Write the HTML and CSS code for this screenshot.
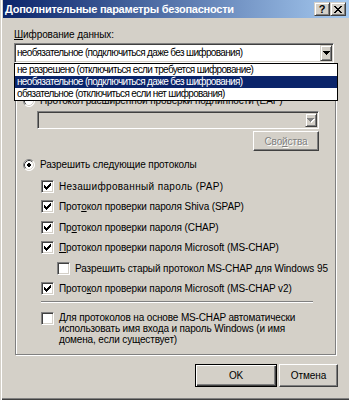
FILE: index.html
```html
<!DOCTYPE html>
<html lang="ru">
<head>
<meta charset="utf-8">
<title>Дополнительные параметры безопасности</title>
<link rel="stylesheet" href="styles.css">
</head>
<body>
<div class="window">
  <div class="titlebar">
    <span class="title-text">Дополнительные параметры безопасности</span>
    <div class="caption-buttons">
      <div class="cap-btn help">?</div>
      <div class="cap-btn"><svg width="8" height="7" viewBox="0 0 8 7"><path d="M0 0h2v1H0zM6 0h2v1H6zM1 1h2v1H1zM5 1h2v1H5zM2 2h4v1H2zM3 3h2v1H3zM2 4h4v1H2zM1 5h2v1H1zM5 5h2v1H5zM0 6h2v1H0zM6 6h2v1H6z"/></svg></div>
    </div>
  </div>
  <div class="content">
    <div class="label"><u>Ш</u>ифрование данных:</div>
    <div class="combo-wrap">
      <div class="combo">
        <div class="combo-text">необязательное (подключиться даже без шифрования)</div>
        <div class="combo-arrow"><svg width="7" height="4" viewBox="0 0 7 4"><path d="M0 0h7v1H0zM1 1h5v1H1zM2 2h3v1H2zM3 3h1v1H3z"/></svg></div>
      </div>
      <div class="listbox">
        <div class="list-item">не разрешено (отключиться если требуется шифрование)</div>
        <div class="list-item sel">необязательное (подключиться даже без шифрования)</div>
        <div class="list-item">обязательное (отключиться если нет шифрования)</div>
      </div>
    </div>
    <div class="group">
      <div class="radio-row">
        <svg class="radio" width="12" height="12" viewBox="0 0 12 12"><circle cx="6" cy="6" r="5.5" fill="#fff"/><path d="M2.11 9.89A5.5 5.5 0 0 1 9.89 2.11" fill="none" stroke="#808080"/><path d="M9.89 2.11A5.5 5.5 0 0 1 2.11 9.89" fill="none" stroke="#fff"/><path d="M2.82 9.18A4.5 4.5 0 0 1 9.18 2.82" fill="none" stroke="#404040"/><path d="M9.18 2.82A4.5 4.5 0 0 1 2.82 9.18" fill="none" stroke="#D4D0C8"/></svg>
        <span class="row-text">Протокол расширенной проверки подлинности (EAP)</span>
      </div>
      <div class="combo disabled eap-combo">
        <div class="combo-text"></div>
        <div class="combo-arrow"><svg width="8" height="5" viewBox="0 0 8 5"><path fill="#fff" d="M1 1h7v1H1zM2 2h5v1H2zM3 3h3v1H3zM4 4h1v1H4z"/><path fill="#808080" d="M0 0h7v1H0zM1 1h5v1H1zM2 2h3v1H2zM3 3h1v1H3z"/></svg></div>
      </div>
      <div class="props-row"><div class="btn disabled-btn props">Сво<u>й</u>ства</div></div>
      <div class="radio-row second">
        <svg class="radio" width="12" height="12" viewBox="0 0 12 12"><circle cx="6" cy="6" r="5.5" fill="#fff"/><path d="M2.11 9.89A5.5 5.5 0 0 1 9.89 2.11" fill="none" stroke="#808080"/><path d="M9.89 2.11A5.5 5.5 0 0 1 2.11 9.89" fill="none" stroke="#fff"/><path d="M2.82 9.18A4.5 4.5 0 0 1 9.18 2.82" fill="none" stroke="#404040"/><path d="M9.18 2.82A4.5 4.5 0 0 1 2.82 9.18" fill="none" stroke="#D4D0C8"/><path d="M5 4h2v1h1v2h-1v1h-2v-1h-1v-2h1z" fill="#000"/></svg>
        <span class="row-text">Разрешить следующие протоколы</span>
      </div>
      <div class="check-row first">
        <div class="checkbox"><svg width="7" height="7" viewBox="0 0 7 7"><path d="M0 2h1v3H0zM1 3h1v3H1zM2 4h1v3H2zM3 3h1v3H3zM4 2h1v3H4zM5 1h1v3H5zM6 0h1v3H6z"/></svg></div>
        <span class="check-label wide">Незашифрованный пароль (PAP)</span>
      </div>
      <div class="check-row gap7">
        <div class="checkbox"><svg width="7" height="7" viewBox="0 0 7 7"><path d="M0 2h1v3H0zM1 3h1v3H1zM2 4h1v3H2zM3 3h1v3H3zM4 2h1v3H4zM5 1h1v3H5zM6 0h1v3H6z"/></svg></div>
        <span class="check-label">Прот<u>о</u>кол проверки пароля Shiva (SPAP)</span>
      </div>
      <div class="check-row gap8">
        <div class="checkbox"><svg width="7" height="7" viewBox="0 0 7 7"><path d="M0 2h1v3H0zM1 3h1v3H1zM2 4h1v3H2zM3 3h1v3H3zM4 2h1v3H4zM5 1h1v3H5zM6 0h1v3H6z"/></svg></div>
        <span class="check-label">Пр<u>о</u>токол проверки пароля (CHAP)</span>
      </div>
      <div class="check-row gap7">
        <div class="checkbox"><svg width="7" height="7" viewBox="0 0 7 7"><path d="M0 2h1v3H0zM1 3h1v3H1zM2 4h1v3H2zM3 3h1v3H3zM4 2h1v3H4zM5 1h1v3H5zM6 0h1v3H6z"/></svg></div>
        <span class="check-label"><u>П</u>ротокол проверки пароля Microsoft (MS-CHAP)</span>
      </div>
      <div class="check-row gap8 sub">
        <div class="checkbox"></div>
        <span class="check-label">Разрешить старый протокол MS-CHAP для Windows 95</span>
      </div>
      <div class="check-row gap7">
        <div class="checkbox"><svg width="7" height="7" viewBox="0 0 7 7"><path d="M0 2h1v3H0zM1 3h1v3H1zM2 4h1v3H2zM3 3h1v3H3zM4 2h1v3H4zM5 1h1v3H5zM6 0h1v3H6z"/></svg></div>
        <span class="check-label">Прото<u>к</u>ол проверки пароля Microsoft (MS-CHAP v2)</span>
      </div>
      <div class="sep"></div>
      <div class="check-row multi">
        <div class="checkbox"></div>
        <span class="check-label">Для протоколов на основе MS-CHAP автоматически<br>использовать имя входа и пароль Windows (и имя<br>домена, если существует)</span>
      </div>
    </div>
    <div class="buttons">
      <div class="btn default ok">OK</div>
      <div class="btn cancel">Отмена</div>
    </div>
  </div>
</div>
</body>
</html>
```
FILE: styles.css
```css
* { box-sizing: border-box; }
html, body { margin: 0; padding: 0; }
body {
  background: #D4D0C8;
  font-family: "Liberation Sans", Arial, sans-serif;
  font-size: 10px;
  letter-spacing: -0.1px;
  color: #000;
}
u { text-decoration: underline; text-underline-offset: 1px; }

.window {
  position: relative;
  width: 349px;
  height: 400px;
  overflow: hidden;
  background: #D4D0C8;
  box-shadow: inset 1px 0 #D4D0C8, inset 2px 0 #fff, inset 0 -1px #404040, inset 0 -2px #808080;
}

.titlebar {
  display: flex;
  align-items: center;
  height: 18px;
  width: 346px;
  margin-left: 3px;
  padding-left: 2px;
  background: linear-gradient(to right, #0A246A, #A6CAF0);
}
.title-text {
  flex: 1;
  color: #fff;
  font-weight: bold;
  font-size: 11px;
  letter-spacing: -0.25px;
  white-space: nowrap;
}
.caption-buttons { display: flex; margin-right: 3px; }
.cap-btn {
  width: 16px;
  height: 14px;
  display: flex;
  align-items: center;
  justify-content: center;
  background: #D4D0C8;
  border: 1px solid;
  border-color: #D4D0C8 #404040 #404040 #D4D0C8;
  box-shadow: inset 1px 1px #fff, inset -1px -1px #808080;
}
.cap-btn.help { font-weight: bold; font-size: 11px; line-height: 12px; letter-spacing: 0; }

.content { padding-left: 14px; }
.label { margin-top: 10px; height: 13px; line-height: 13px; }

.combo-wrap { position: relative; margin-top: 2px; }
.combo {
  width: 320px;
  height: 20px;
  display: flex;
  align-items: stretch;
  padding: 1px;
  background: #fff;
  border: 1px solid;
  border-color: #808080 #fff #fff #808080;
  box-shadow: inset 1px 1px #404040, inset -1px -1px #D4D0C8;
}
.combo-text {
  flex: 1;
  padding-left: 1px;
  line-height: 16px;
  letter-spacing: -0.65px;
  white-space: nowrap;
  overflow: hidden;
}
.combo-arrow {
  width: 12px;
  display: flex;
  align-items: center;
  justify-content: center;
  background: #D4D0C8;
  border: 1px solid;
  border-color: #D4D0C8 #404040 #404040 #D4D0C8;
  box-shadow: inset 1px 1px #fff, inset -1px -1px #808080;
}
.listbox {
  position: absolute;
  left: 0;
  top: 20px;
  z-index: 5;
  width: 324px;
  height: 38px;
  background: #fff;
  border: 1px solid #000;
}
.list-item {
  height: 12px;
  line-height: 12px;
  padding-left: 2px;
  letter-spacing: -0.65px;
  white-space: nowrap;
}
.list-item.sel { background: #0A246A; color: #fff; }

.group {
  position: relative;
  margin-top: 15px;
  margin-left: 1px;
  width: 321px;
  padding: 15px 0 9px 0;
  border: 1px solid #808080;
  box-shadow: 1px 1px 0 #fff, inset 1px 1px 0 #fff;
}
.radio-row {
  display: flex;
  align-items: center;
  height: 13px;
  margin-left: 7px;
}
.radio-row.second { margin-top: 7px; }
.radio { flex: none; margin-right: 5px; }
.row-text { line-height: 13px; white-space: nowrap; }

.eap-combo {
  margin: 4px 0 0 21px;
  width: 282px;
  height: 18px;
}
.combo.disabled { background: #D4D0C8; }
.props-row { display: flex; margin: 2px 0 0 237px; }

.btn {
  display: flex;
  align-items: center;
  justify-content: center;
  height: 23px;
  background: #D4D0C8;
  border: 1px solid;
  border-color: #fff #404040 #404040 #fff;
  box-shadow: inset -1px -1px #808080;
  white-space: nowrap;
}
.btn.props { width: 66px; height: 20px; }
.disabled-btn { color: #808080; text-shadow: 1px 1px 0 #fff; }
.btn.default {
  border-color: #000;
  box-shadow: inset 1px 1px #fff, inset -1px -1px #404040, inset -2px -2px #808080;
}

.check-row {
  display: flex;
  align-items: center;
  height: 13px;
  margin-left: 25px;
}
.check-row.first { margin-top: 9px; }
.check-row.gap7 { margin-top: 7px; }
.check-row.gap8 { margin-top: 8px; }
.check-row.sub { margin-left: 41px; }
.checkbox {
  flex: none;
  width: 13px;
  height: 13px;
  display: flex;
  align-items: center;
  justify-content: center;
  background: #fff;
  border: 1px solid;
  border-color: #808080 #fff #fff #808080;
  box-shadow: inset 1px 1px #404040, inset -1px -1px #D4D0C8;
}
.check-label { margin-left: 5px; line-height: 13px; white-space: nowrap; }
.check-label.wide { letter-spacing: 0.35px; }

.sep {
  margin: 6px 0 0 25px;
  width: 272px;
  height: 2px;
  border-top: 1px solid #808080;
  border-bottom: 1px solid #fff;
}
.check-row.multi {
  margin-top: 9px;
  height: auto;
  align-items: flex-start;
}
.check-row.multi .check-label { line-height: 11px; letter-spacing: -0.15px; }

.buttons {
  display: flex;
  gap: 2px;
  margin: 9px 0 0 181px;
}
.btn.ok { width: 82px; }
.btn.cancel { width: 59px; }
```
